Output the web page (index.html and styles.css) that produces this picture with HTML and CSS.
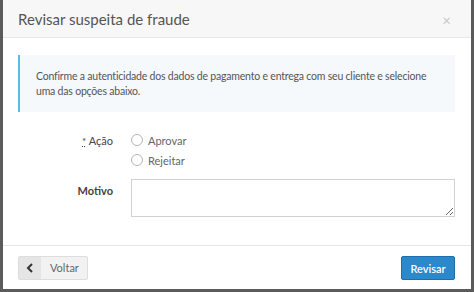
FILE: index.html
```html
<!DOCTYPE html>
<html lang="pt-BR">
<head>
    <meta charset="UTF-8">
    <title>Revisar suspeita de fraude</title>
    <link rel="stylesheet" href="styles.css">
</head>
<body>
    <div class="modal">
        <div class="modal-header">
            <div class="modal-title">Revisar suspeita de fraude</div>
            <span class="btn-close">&times;</span>
        </div>

        <div class="modal-body">
            <div class="alert-info">
                Confirme a autenticidade dos dados de pagamento e entrega com seu cliente e selecione uma das opções abaixo.
            </div>

            <div class="form-row">
                <div class="form-label"><abbr class="required">*</abbr> Ação</div>
                <div class="radio-list">
                    <label class="radio"><span class="radio-dot"></span>Aprovar</label>
                    <label class="radio"><span class="radio-dot"></span>Rejeitar</label>
                </div>
            </div>

            <div class="form-row row-motivo">
                <div class="form-label label-bold">Motivo</div>
                <textarea class="field-text"></textarea>
            </div>
        </div>

        <div class="modal-footer">
            <button class="btn-back">
                <span class="btn-icon">
                    <svg width="8" height="10" viewBox="0 0 8 10"><path d="M6 1 L2 5 L6 9" fill="none" stroke="#333" stroke-width="2"/></svg>
                </span>
                <span class="btn-text">Voltar</span>
            </button>
            <button class="btn-primary">Revisar</button>
        </div>
    </div>
</body>
</html>
```

FILE: styles.css
```css
* {
    margin: 0;
    padding: 0;
    box-sizing: border-box;
    font-family: 'Lato', sans-serif;
}

body {
    background-color: #5b5b5b;
    width: 474px;
    height: 292px;
    overflow: hidden;
}

.modal {
    margin: 0 3px;
    width: 468px;
    height: 289px;
    background-color: white;
    display: flex;
    flex-direction: column;
}

.modal-header {
    height: 38px;
    background-color: #f7f7f7;
    border-bottom: 1px solid #e8e8e8;
    display: flex;
    align-items: center;
    justify-content: space-between;
    padding: 0 20px 0 15px;
}

.modal-title {
    font-size: 15px;
    color: #555;
    padding-top: 1px;
}

.btn-close {
    font-size: 15px;
    color: #c8c8c8;
    padding-top: 3px;
}

.modal-body {
    flex-grow: 1;
    padding: 17px 16px 0 15px;
}

.alert-info {
    background-color: #f5f9fc;
    border-left: 2px solid #5bbde0;
    padding: 14px 8px 13px 16px;
    font-size: 10.5px;
    letter-spacing: -0.2px;
    line-height: 15px;
    color: #555;
    margin-bottom: 18px;
}

.form-row {
    display: grid;
    grid-template-columns: 95px 1fr;
    column-gap: 18px;
}

.form-label {
    text-align: right;
    font-size: 11px;
    color: #444;
    line-height: 21px;
}

.label-bold {
    font-weight: bold;
    line-height: 24px;
}

.required {
    text-decoration: underline dotted;
    font-size: 10px;
}

.radio-list {
    display: flex;
    flex-direction: column;
}

.radio {
    display: flex;
    align-items: center;
    gap: 5px;
    height: 20px;
    font-size: 11px;
    color: #666;
}

.radio-dot {
    width: 12px;
    height: 12px;
    border: 1px solid #b5b5b5;
    border-radius: 50%;
    background-color: white;
}

.row-motivo {
    margin-top: 9px;
}

.field-text {
    height: 38px;
    border: 1px solid #d2d2d2;
    resize: vertical;
    display: block;
    width: 324px;
}

.modal-footer {
    border-top: 1px solid #e5e5e5;
    padding: 10px 16px 9px 15px;
    display: flex;
    justify-content: space-between;
    align-items: center;
}

.btn-back {
    display: flex;
    height: 24px;
    border: 1px solid #ddd;
    border-radius: 2px;
    background-color: #f2f2f2;
    overflow: hidden;
    cursor: pointer;
}

.btn-icon {
    width: 22px;
    background-color: #e5e5e5;
    display: flex;
    align-items: center;
    justify-content: center;
}

.btn-text {
    padding: 0 8px 0 9px;
    font-size: 11px;
    color: #666;
    line-height: 22px;
}

.btn-primary {
    height: 24px;
    width: 54px;
    border: 1px solid #1e6fa9;
    border-radius: 2px;
    background-color: #2a88cb;
    color: white;
    font-size: 11px;
    font-weight: 600;
    cursor: pointer;
}
```
